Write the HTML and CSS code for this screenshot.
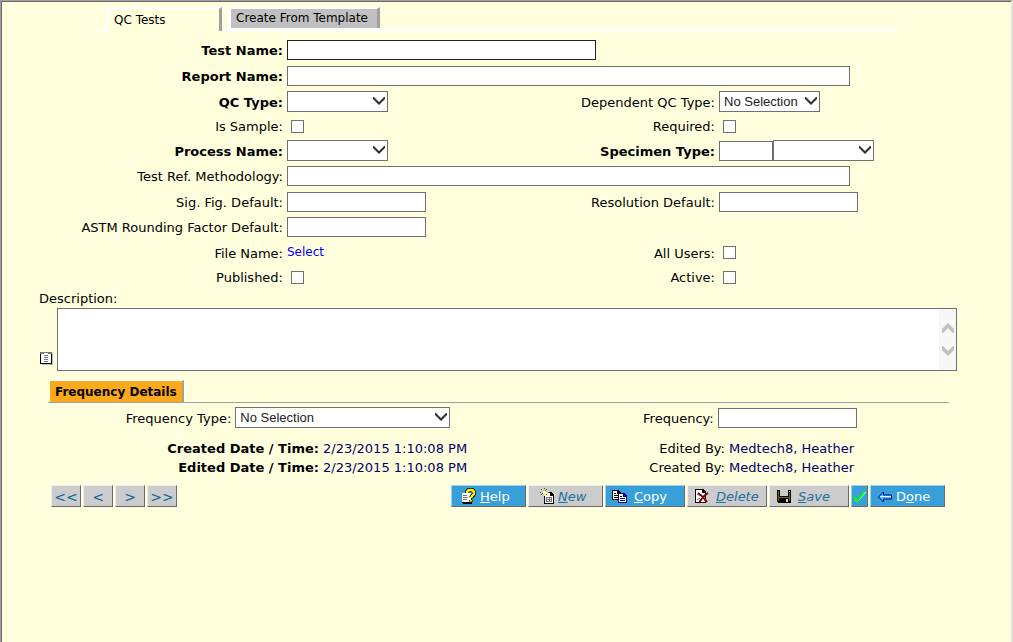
FILE: index.html
```html
<!DOCTYPE html>
<html lang="en">
<head>
<meta charset="utf-8">
<title>QC Tests</title>
<link rel="stylesheet" href="styles.css">
</head>
<body>
<svg class="defs" aria-hidden="true">
  <symbol id="arrow" viewBox="0 0 12 8"><path d="M0 0h1l5 5 5-5h1v2L6 8 0 2z"/></symbol>
  <symbol id="chevron" viewBox="0 0 12 10"><path d="M0 0h1l5 5 5-5h1v4L6 10 0 4z"/></symbol>
</svg>
<form class="page">
  <nav class="tabs">
    <button type="button" class="tab tab-current">QC Tests</button>
    <button type="button" class="tab tab-other">Create From Template</button>
  </nav>

  <section class="fields">
    <label class="required" for="test-name">Test Name:</label>
    <div class="wide"><input class="text medium strong" id="test-name" type="text"></div>

    <label class="required" for="report-name">Report Name:</label>
    <div class="wide"><input class="text long" id="report-name" type="text"></div>

    <label class="required" for="qc-type">QC Type:</label>
    <div><span class="select"><select id="qc-type"><option></option></select><svg><use href="#arrow"/></svg></span></div>
    <label for="dep-type">Dependent QC Type:</label>
    <div><span class="select"><select id="dep-type"><option>No Selection</option></select><svg><use href="#arrow"/></svg></span></div>

    <label for="is-sample">Is Sample:</label>
    <div><input id="is-sample" type="checkbox"></div>
    <label for="is-required">Required:</label>
    <div><input id="is-required" type="checkbox"></div>

    <label class="required" for="process">Process Name:</label>
    <div><span class="select"><select id="process"><option></option></select><svg><use href="#arrow"/></svg></span></div>
    <label class="required" for="specimen">Specimen Type:</label>
    <div class="pair"><input class="text short" id="specimen" type="text"><span class="select"><select aria-label="Specimen type list"><option></option></select><svg><use href="#arrow"/></svg></span></div>

    <label for="method">Test Ref. Methodology:</label>
    <div class="wide"><input class="text long" id="method" type="text"></div>

    <label for="sig-fig">Sig. Fig. Default:</label>
    <div><input class="text" id="sig-fig" type="text"></div>
    <label for="resolution">Resolution Default:</label>
    <div><input class="text" id="resolution" type="text"></div>

    <label for="rounding">ASTM Rounding Factor Default:</label>
    <div class="wide"><input class="text" id="rounding" type="text"></div>

    <span class="caption">File Name:</span>
    <div><a href="#">Select</a></div>
    <label for="all-users">All Users:</label>
    <div><input id="all-users" type="checkbox"></div>

    <label for="published">Published:</label>
    <div><input id="published" type="checkbox"></div>
    <label for="active">Active:</label>
    <div><input id="active" type="checkbox"></div>
  </section>

  <section class="description">
    <label for="description">Description:</label>
    <div class="memo">
      <svg class="note" viewBox="0 0 14 14" shape-rendering="crispEdges">
        <path fill="#b9b9b9" d="M2 2h11v12H2z"/><path d="M0 1h12v12H0z"/><path fill="#fff" d="M1 3h10v9H1z"/>
        <path fill="#777" d="M0 1h12v2H0zM4 4h4v1H4zM4 6h4v1H4zM4 8h4v1H4zM4 10h4v1H4z"/><path fill="#fff" d="M4 2h4v1H4z"/>
      </svg>
      <div class="memo-box">
        <textarea id="description"></textarea>
        <div class="scroll" aria-hidden="true">
          <svg class="up"><use href="#chevron"/></svg>
          <svg><use href="#chevron"/></svg>
        </div>
      </div>
    </div>
  </section>

  <section class="frequency">
    <div class="section-head"><h2>Frequency Details</h2></div>
    <div class="frequency-row">
      <label for="freq-type">Frequency Type:</label>
      <span class="select select-wide"><select id="freq-type"><option>No Selection</option></select><svg><use href="#arrow"/></svg></span>
      <label for="freq">Frequency:</label>
      <input class="text" id="freq" type="text">
    </div>
  </section>

  <section class="audit">
    <b>Created Date / Time:</b><span class="value">2/23/2015 1:10:08 PM</span>
    <span class="person">Edited By: <span class="value">Medtech8, Heather</span></span>
    <b>Edited Date / Time:</b><span class="value">2/23/2015 1:10:08 PM</span>
    <span class="person">Created By: <span class="value">Medtech8, Heather</span></span>
  </section>

  <footer class="toolbar">
    <div class="group">
      <button type="button" class="nav">&lt;&lt;</button>
      <button type="button" class="nav">&lt;</button>
      <button type="button" class="nav">&gt;</button>
      <button type="button" class="nav">&gt;&gt;</button>
    </div>
    <div class="group">
      <button type="button" class="action on w75">
        <svg viewBox="0 0 16 16"><g shape-rendering="crispEdges"><path fill="#000" d="M1 6h10v10H2v-1H1z"/><path fill="#fff" d="M1 5h9v9H1z"/><path fill="#777" d="M2 7h4v1H2zM2 9h5v1H2zM2 11h4v1H2z"/></g><path fill="none" stroke="#000" stroke-width="4" d="M6 5q0-3 3-3h1q3 0 3 3 0 2-2 3l-1 2M10 12v1.500"/><path fill="none" stroke="#fe0" stroke-width="2.500" d="M6 5q0-3 3-3h1q3 0 3 3 0 2-2 3l-1 2M10 12v1.500"/></svg>
        <span><u>H</u>elp</span></button>
      <button type="button" class="action off w75">
        <svg viewBox="0 0 16 16" shape-rendering="crispEdges"><path d="M5 4h7l3 3v9H5z"/><path fill="#fff" d="M6 5h5v3h3v7H6z"/><path fill="#777" d="M7 9h6v5H7z"/><path fill="#fff" d="M8 10h2v1H8zM11 10h1v1h-1zM8 12h2v1H8zM11 12h1v1h-1z"/><path fill="none" stroke="#555" stroke-width="1" d="M5 0v8M1 4h9M2 1l6 6M8 1L2 7"/><path fill="#ffe800" d="M5 1h1v2H5zM2 4h2v1H2zM7 4h2v1H7zM5 6h1v2H5zM3 2h1v1H3z"/><path fill="#fff" d="M4 3h3v3H4z"/></svg>
        <span><u>N</u>ew</span></button>
      <button type="button" class="action on w80">
        <svg viewBox="0 0 16 16" shape-rendering="crispEdges"><path d="M0 2h6l3 3v7H0z"/><path fill="#fff" d="M1 3h4v3h3v5H1z"/><path d="M2 5h2v1H2zM2 7h5v1H2zM2 9h5v1H2z"/><path fill="#000080" d="M6 5h6l3 3v7H6z"/><path fill="#fff" d="M7 6h4v3h3v5H7z"/><path fill="#000080" d="M8 8h2v1H8zM8 10h5v1H8zM8 12h5v1H8z"/></svg>
        <span><u>C</u>opy</span></button>
      <button type="button" class="action off w80">
        <svg viewBox="0 0 16 16"><path shape-rendering="crispEdges" d="M1 1h8l3 3v11H1z"/><path shape-rendering="crispEdges" fill="#fff" d="M2 2h6v3h3v9H2z"/><path fill="none" stroke="#777" d="M3 6l3 2M3 12l3-2"/><path fill="none" stroke="#800000" stroke-width="2" d="M4 5q5 3 9 9M14 5q-5 3-9 10"/></svg>
        <span><u>D</u>elete</span></button>
      <button type="button" class="action off w80">
        <svg viewBox="0 0 16 16" shape-rendering="crispEdges"><path d="M1 2h14v13H2l-1-1z"/><path fill="#6b6b00" d="M2 3h1v10H2zM13 5h1v8h-1zM3 9h10v1H3z"/><path fill="#ccc" d="M4 2h8v6H4zM10 11h2v3h-2zM13 3h1v1h-1z"/></svg>
        <span><u>S</u>ave</span></button>
      <button type="button" class="action on check" aria-label="Check">
        <svg viewBox="0 0 16 16"><path fill="none" stroke="#dfd" stroke-width="1" d="M3 12l2 2L14 4"/><path fill="none" stroke="#0f0" stroke-width="2" d="M2 9l3 4 8-10"/></svg></button>
      <button type="button" class="action on done w75">
        <svg viewBox="0 0 16 16"><path fill="#44bfff" stroke="#000080" d="M1.500 9l5-5V7H14.500v4h-8v3z"/><path stroke="#fff" d="M3 8.500h11"/></svg>
        <span>D<u>o</u>ne</span></button>
    </div>
  </footer>
</form>
</body>
</html>
```
FILE: styles.css
```css
* { box-sizing: border-box; }
body {
  margin: 0;
  font: 13px/19px Verdana, "DejaVu Sans", sans-serif;
  color: #000;
  background: #ffffde;
}
.defs { position: absolute; width: 0; height: 0; }
.page {
  min-height: 100vh;
  padding-top: 6px;
  border-top: 1px solid #a0a0a0;
  border-left: 1px solid #a0a0a0;
  border-right: 2px solid #e3e3e3;
  box-shadow: inset 1px 1px #696969;
}
button, input, select, textarea { margin: 0; font: inherit; border-radius: 0; }

.tabs {
  display: flex;
  align-items: flex-start;
  gap: 6px;
  height: 24px;
  margin: 0 113px 0 97px;
  padding-left: 8px;
  background: linear-gradient(#fff, #fff) 0 100% / 100% 3px no-repeat;
}
.tab {
  padding: 0 5px;
  font-size: 12px;
  text-align: left;
  color: #000;
  border: 0 solid #fff;
  border-width: 2px 3px 0;
  border-right-color: #a0a0a0;
}
.tab-current { width: 116px; height: 24px; background: #ffffde; }
.tab-other { width: 152px; height: 21px; background: #c0c0c0; white-space: nowrap; }

.fields {
  display: grid;
  grid-template-columns: 282fr 283fr 141fr 292fr;
  grid-template-rows: 26px 26px 25px 24px 25px 26px 25px 26px 25px 24px;
  column-gap: 4px;
  align-items: center;
  padding-top: 6px;
}
.fields > label, .caption { padding-top: 1px; text-align: right; white-space: nowrap; }
.fields > div { display: flex; }
.fields .wide { grid-column: 2 / -1; }
.fields .pair { align-items: flex-end; }
.required { font-weight: bold; }
a { font-size: 12px; color: #00f; text-decoration: none; }

.text { width: 139px; height: 20px; padding: 0 4px; border: 1px solid #707070; background: #fff; }
.medium { width: 309px; }
.long { width: 563px; }
.short { width: 54px; }
.strong { border-color: #222; }
.select { position: relative; display: block; width: 101px; height: 21px; }
.select-wide { width: 215px; }
.select select {
  display: block;
  width: 100%;
  height: 100%;
  padding: 0 4px;
  appearance: none;
  font: 13px "Liberation Sans", Arial, sans-serif;
  color: #222;
  border: 1px solid #707070;
  background: #fff;
}
.select svg { position: absolute; top: 6px; right: 3px; width: 12px; height: 8px; fill: #333; pointer-events: none; }
input[type="checkbox"] { appearance: none; width: 13px; height: 13px; margin-left: 4px; border: 1px solid #707070; background: #fff; }

.description { padding: 0 54px 0 39px; }
.description label { display: block; margin-left: -1px; padding-top: 1px; line-height: 18px; }
.memo { display: flex; align-items: flex-end; gap: 3px; }
.note { width: 14px; height: 14px; margin-bottom: 6px; }
.memo-box { position: relative; flex: 1; }
textarea { display: block; width: 100%; height: 63px; border: 1px solid #707070; background: #fff; resize: none; overflow: hidden; }
.scroll {
  position: absolute;
  inset: 1px 1px 1px auto;
  display: flex;
  flex-direction: column;
  align-items: center;
  justify-content: center;
  gap: 13px;
  width: 17px;
  background: #f7f7f7;
}
.scroll svg { width: 12px; height: 10px; fill: #c1c1c1; }
.scroll .up { transform: rotate(180deg); }

.frequency { padding: 9px 62px 0 47px; }
.section-head { display: flex; border-bottom: 1px solid #a09fa9; }
h2 {
  margin: 0 0 0 2px;
  padding: 1px 5px 0;
  font: bold 12px/20px Verdana, "DejaVu Sans", sans-serif;
  background: #fca91c;
  border-top: 1px solid #fff;
  border-right: 2px solid #a0a0a0;
}
.frequency-row {
  display: grid;
  grid-template-columns: 183fr 215px 259fr 231fr;
  column-gap: 4px;
  align-items: center;
  padding-top: 4px;
}
.frequency-row label { padding-top: 2px; text-align: right; }

.audit {
  display: grid;
  grid-template-columns: 318fr 200fr 327fr;
  column-gap: 4px;
  padding: 11px 157px 0 0;
}
.audit b, .person { text-align: right; }
.value { color: #000066; }

.toolbar { display: flex; justify-content: space-between; padding: 8px 66px 0 50px; }
.group { display: flex; gap: 2px; }
.nav, .action { height: 22px; border: 1px solid #696969; border-top-color: #eee; border-left-color: #eee; }
.nav { width: 30px; padding: 2px 0 0; font-size: 14px; line-height: 17px; color: #00659c; background: #ccc; }
.action { display: flex; align-items: center; gap: 3px; padding: 0 9px; }
.action svg { flex: none; width: 16px; height: 16px; }
.on { color: #fff; background: #399fd9; border-top-color: #9fd0ec; border-left-color: #9fd0ec; }
.off { padding: 0 8px 0 10px; color: #22709f; background: #ccc; font-style: italic; }
.w75 { width: 75px; }
.w80 { width: 80px; padding: 0 6px; }
.w80 svg { margin-right: 3px; }
.done { padding: 0 6px; }
.check { width: 17px; padding: 0; }
```
